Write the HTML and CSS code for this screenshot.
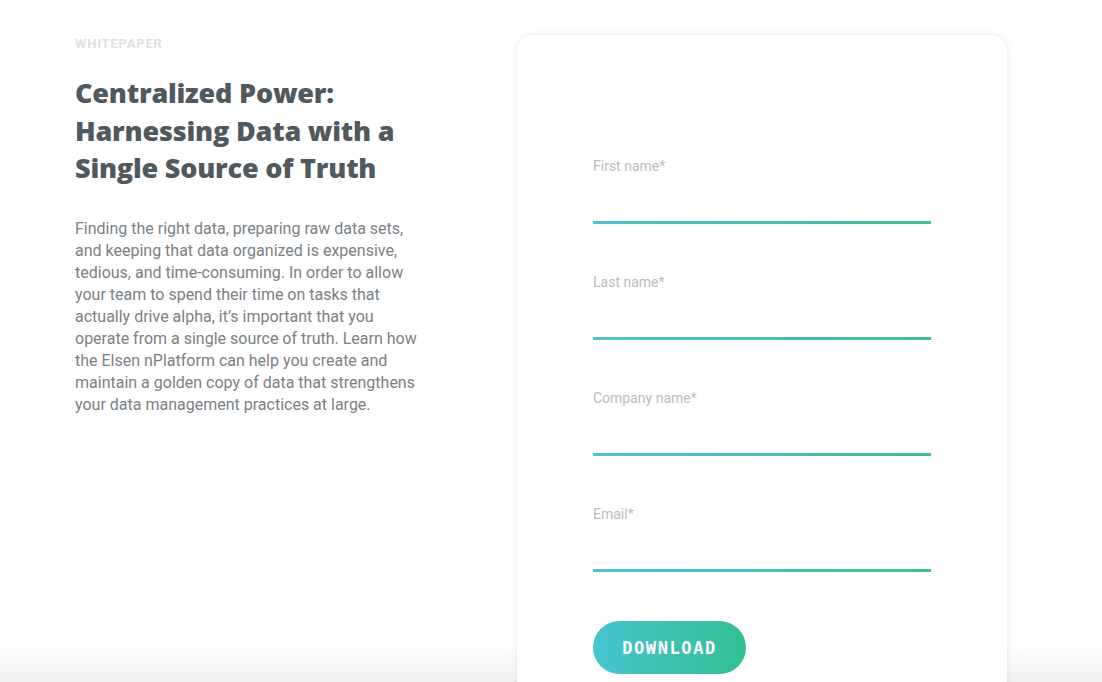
FILE: index.html
```html
<!DOCTYPE html>
<html lang="en">
<head>
<meta charset="utf-8">
<title>Whitepaper</title>
<link rel="stylesheet" href="styles.css">
</head>
<body>
<main class="page">
  <section class="intro">
    <div class="eyebrow">WHITEPAPER</div>
    <h1 class="title">Centralized Power: Harnessing Data with a Single Source of Truth</h1>
    <p class="lead">Finding the right data, preparing raw data sets, and keeping that data organized is expensive, tedious, and time-consuming. In order to allow your team to spend their time on tasks that actually drive alpha, it’s important that you operate from a single source of truth. Learn how the Elsen nPlatform can help you create and maintain a golden copy of data that strengthens your data management practices at large.</p>
  </section>
  <section class="card">
    <form class="form">
      <label class="field">
        <span class="field-label">First name*</span>
        <input class="field-input" type="text">
      </label>
      <label class="field">
        <span class="field-label">Last name*</span>
        <input class="field-input" type="text">
      </label>
      <label class="field">
        <span class="field-label">Company name*</span>
        <input class="field-input" type="text">
      </label>
      <label class="field">
        <span class="field-label">Email*</span>
        <input class="field-input" type="email">
      </label>
      <button class="btn" type="button">DOWNLOAD</button>
    </form>
  </section>
</main>
</body>
</html>
```
FILE: styles.css
```css
html, body {
  margin: 0;
  padding: 0;
}
body {
  font-family: Roboto, "Liberation Sans", sans-serif;
  overflow: hidden;
  height: 682px;
  background: linear-gradient(180deg, #ffffff 0, #ffffff 645px, #f1f1f1 682px);
}
.page {
  display: flex;
  align-items: flex-start;
  padding-left: 75px;
}
.intro {
  width: 360px;
  margin-right: 82px;
  padding-top: 36px;
}
.eyebrow {
  font-family: Roboto, sans-serif;
  font-weight: 700;
  font-size: 13px;
  line-height: 16px;
  color: #e0e1e3;
  letter-spacing: 0.8px;
}
.title {
  margin: 22px 0 0;
  font-family: "Open Sans", sans-serif;
  font-weight: 800;
  font-size: 27px;
  line-height: 37.5px;
  color: #50595d;
  width: 340px;
  letter-spacing: -0.2px;
}
.lead {
  margin: 31px 0 0;
  font-size: 16px;
  line-height: 22px;
  color: #7b8084;
  width: 348px;
}
.card {
  margin-top: 35px;
  width: 490px;
  height: 700px;
  box-sizing: border-box;
  border-radius: 16px;
  background: #fff;
  box-shadow: 0 0 6px rgba(0, 0, 0, 0.1);
  padding: 123px 0 0 76px;
}
.form {
  display: flex;
  flex-direction: column;
  width: 338px;
}
.field {
  display: flex;
  flex-direction: column;
  margin-bottom: 50px;
}
.field:last-of-type {
  margin-bottom: 49px;
}
.field-label {
  font-size: 14px;
  line-height: 16px;
  color: #b9bcbf;
}
.field-input {
  height: 50px;
  box-sizing: border-box;
  border: 0;
  border-bottom: 3px solid #48bdb2;
  border-image: linear-gradient(90deg, #4fc2d2, #42bc92) 1;
  padding: 0;
  outline: none;
  background: transparent;
}
.btn {
  align-self: flex-start;
  width: 153px;
  height: 53px;
  border: 0;
  border-radius: 27px;
  background: linear-gradient(90deg, #47c5cf, #33bf93);
  color: #fff;
  font-family: "DejaVu Sans Mono", monospace;
  font-weight: 700;
  font-size: 17px;
  letter-spacing: 1.6px;
  padding: 0;
}
```
